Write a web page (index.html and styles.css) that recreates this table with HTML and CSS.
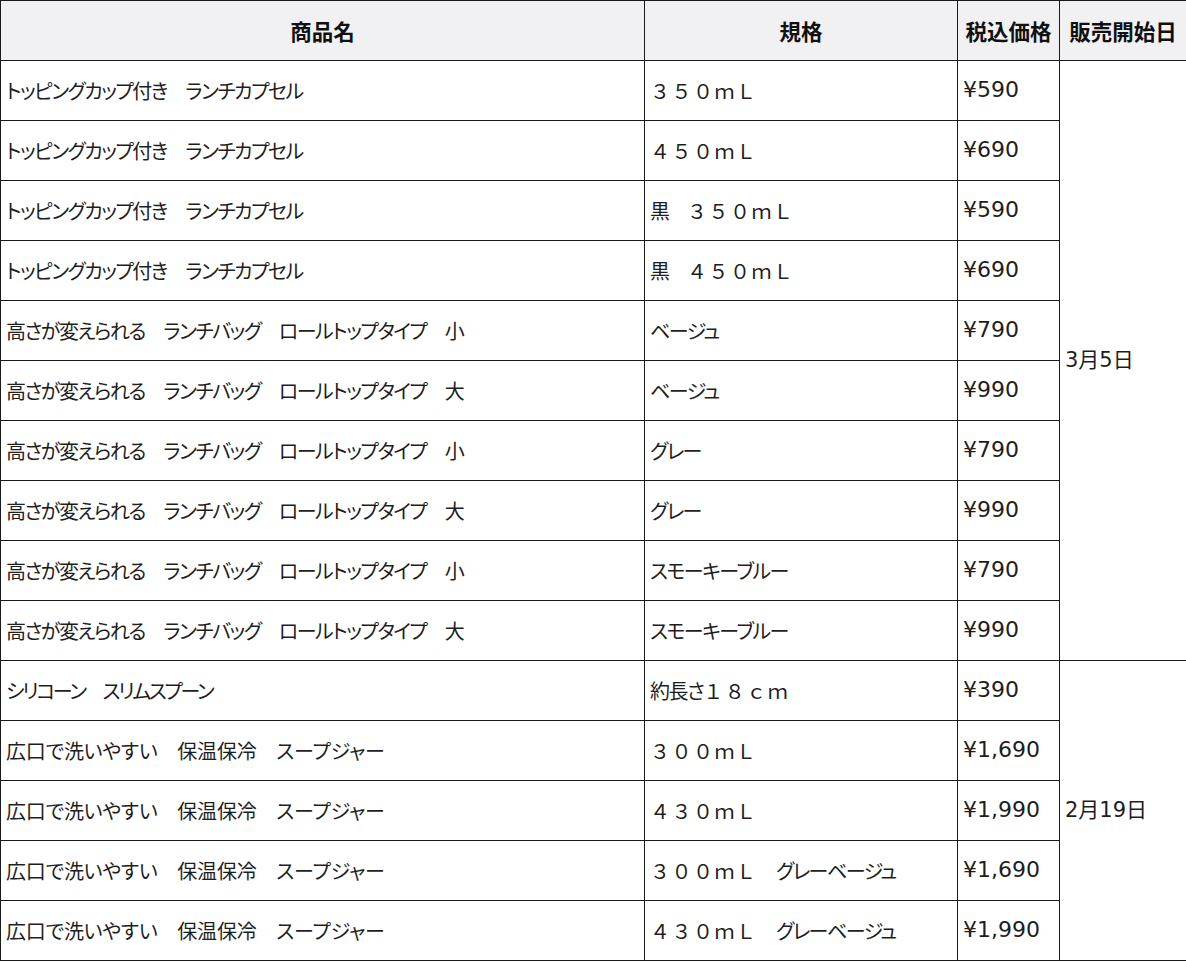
FILE: index.html
```html
<!DOCTYPE html>
<html lang="ja">
<head>
<meta charset="utf-8">
<link rel="stylesheet" href="styles.css">
</head>
<body>
<table class="tbl">
  <colgroup>
    <col class="c1"><col class="c2"><col class="c3"><col class="c4">
  </colgroup>
  <thead>
    <tr><th>商品名</th><th>規格</th><th>税込価格</th><th>販売開始日</th></tr>
  </thead>
  <tbody>
    <tr><td class="nm t15">トッピングカップ付き　ランチカプセル</td><td class="sp"><span class="fw">３５０ｍＬ</span></td><td class="pr">¥590</td><td class="date" rowspan="10">3月5日</td></tr>
    <tr><td class="nm t15">トッピングカップ付き　ランチカプセル</td><td class="sp"><span class="fw">４５０ｍＬ</span></td><td class="pr">¥690</td></tr>
    <tr><td class="nm t15">トッピングカップ付き　ランチカプセル</td><td class="sp">黒　<span class="fw">３５０ｍＬ</span></td><td class="pr">¥590</td></tr>
    <tr><td class="nm t15">トッピングカップ付き　ランチカプセル</td><td class="sp">黒　<span class="fw">４５０ｍＬ</span></td><td class="pr">¥690</td></tr>
    <tr><td class="nm t15">高さが変えられる　ランチバッグ　ロールトップタイプ　小</td><td class="sp">ベージュ</td><td class="pr">¥790</td></tr>
    <tr><td class="nm t15">高さが変えられる　ランチバッグ　ロールトップタイプ　大</td><td class="sp">ベージュ</td><td class="pr">¥990</td></tr>
    <tr><td class="nm t15">高さが変えられる　ランチバッグ　ロールトップタイプ　小</td><td class="sp">グレー</td><td class="pr">¥790</td></tr>
    <tr><td class="nm t15">高さが変えられる　ランチバッグ　ロールトップタイプ　大</td><td class="sp">グレー</td><td class="pr">¥990</td></tr>
    <tr><td class="nm t15">高さが変えられる　ランチバッグ　ロールトップタイプ　小</td><td class="sp">スモーキーブルー</td><td class="pr">¥790</td></tr>
    <tr><td class="nm t15">高さが変えられる　ランチバッグ　ロールトップタイプ　大</td><td class="sp">スモーキーブルー</td><td class="pr">¥990</td></tr>
    <tr><td class="nm t23">シリコーン　スリムスプーン</td><td class="sp">約長さ<span class="fw">１８ｃｍ</span></td><td class="pr">¥390</td><td class="date" rowspan="5">2月19日</td></tr>
    <tr><td class="nm t02">広口で洗いやすい　保温保冷　スープジャー</td><td class="sp"><span class="fw">３００ｍＬ</span></td><td class="pr">¥1,690</td></tr>
    <tr><td class="nm t02">広口で洗いやすい　保温保冷　スープジャー</td><td class="sp"><span class="fw">４３０ｍＬ</span></td><td class="pr">¥1,990</td></tr>
    <tr><td class="nm t02">広口で洗いやすい　保温保冷　スープジャー</td><td class="sp"><span class="fw">３００ｍＬ</span>　グレーベージュ</td><td class="pr">¥1,690</td></tr>
    <tr><td class="nm t02">広口で洗いやすい　保温保冷　スープジャー</td><td class="sp"><span class="fw">４３０ｍＬ</span>　グレーベージュ</td><td class="pr">¥1,990</td></tr>
  </tbody>
</table>
</body>
</html>
```
FILE: styles.css
```css
html, body {
  margin: 0;
  padding: 0;
  background: #ffffff;
}
.tbl {
  border-collapse: collapse;
  table-layout: fixed;
  width: 1186px;
  font-family: "Noto Sans CJK JP", "Noto Sans", sans-serif;
  font-size: 20px;
  color: #1e1e1e;
  font-feature-settings: "palt";
}
.c1 { width: 644px; }
.c2 { width: 313px; }
.c3 { width: 102px; }
.c4 { width: 127px; }
.tbl th,
.tbl td {
  border: 1px solid #1a1a1a;
  height: 60px;
  padding: 0 0 0 5px;
  box-sizing: border-box;
  vertical-align: middle;
  text-align: left;
  white-space: nowrap;
  line-height: 1.2;
}
.tbl th {
  background: #f1f0f3;
  font-weight: bold;
  font-size: 21.5px;
  text-align: center;
  padding: 0;
  color: #111;
}
.t15 { letter-spacing: -1.5px; }
.t23 { letter-spacing: -2.3px; }
.t02 { letter-spacing: -0.2px; }
.sp { letter-spacing: -1.5px; }
.fw {
  font-feature-settings: normal;
  letter-spacing: 1.5px;
}
.pr {
  font-family: "DejaVu Sans", "Noto Sans CJK JP", sans-serif;
  font-size: 22px;
  padding: 6px 0 0 4px;
}
.date {
  font-family: "DejaVu Sans", "Noto Sans CJK JP", sans-serif;
  font-size: 21px;
  padding-left: 6px;
}
```
